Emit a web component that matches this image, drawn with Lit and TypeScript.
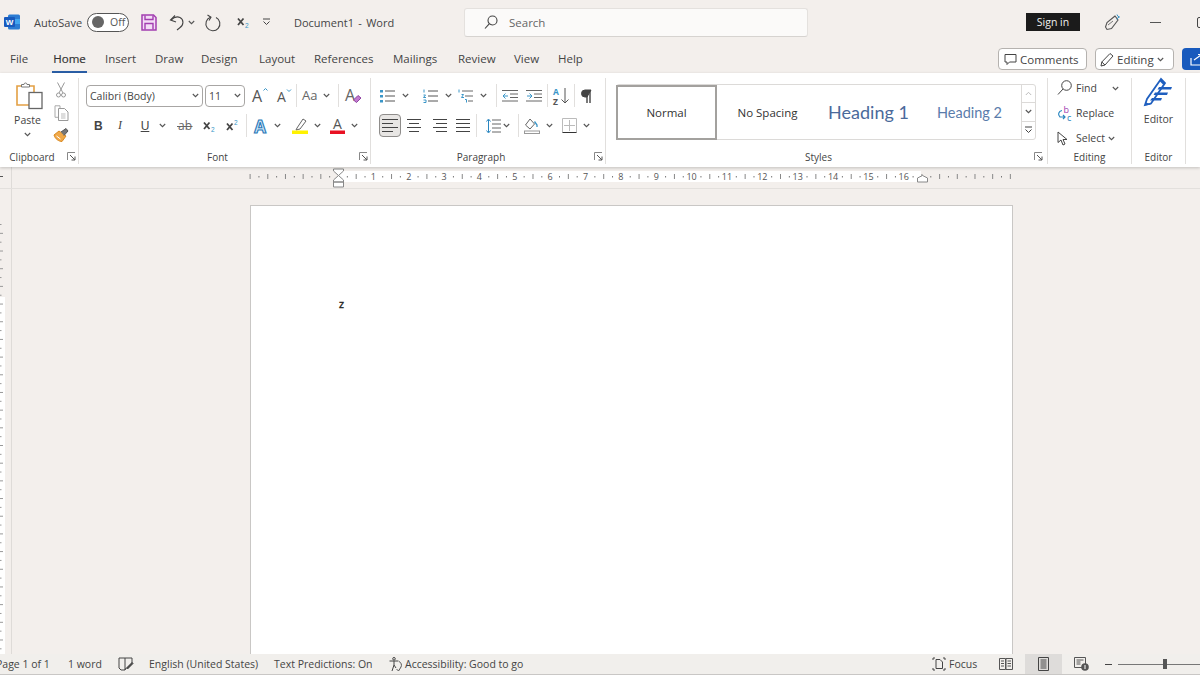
import { LitElement, html, css, svg } from 'lit';
import { customElement } from 'lit/decorators.js';

const ink = '#444';
const blue = '#3a96c8';

const chev = () => html`<svg class="chev" width="7" height="5" viewBox="0 0 7 5"><path d="M.8 1 3.5 3.7 6.2 1" fill="none" stroke="#555" stroke-width="1.1"/></svg>`;
const icon = (w: number, h: number, body: unknown) =>
  html`<svg width=${w} height=${h} viewBox="0 0 ${w} ${h}" fill="none" stroke="${ink}">${body}</svg>`;
const split = (body: unknown, tight = false) => html`<span class="split ${tight ? 'tight' : ''}">${body}${chev()}</span>`;
const launcher = () => icon(9, 9, svg`<path d="M.5 8V.5H8" stroke="#888"/><path d="M3 3l5 5M8 4.5V8H4.5" stroke="#555"/>`);
const lines = (xs: number[][]) => xs.map(([a, b, y]) => svg`<path d="M${a} ${y}H${b}"/>`);

const Icons = {
  word: icon(16, 16, svg`<rect x="4" y="0.5" width="12" height="15" rx="1.5" fill="#2b7cd3" stroke="none"/><rect x="10" y="5" width="6" height="5" fill="#41a5ee" stroke="none"/><rect x="0" y="3" width="11" height="10" rx="1" fill="#185abd" stroke="none"/><text x="5.5" y="11" font-size="8" font-weight="700" text-anchor="middle" fill="#fff" stroke="none" font-family="Liberation Sans">W</text>`),
  save: icon(16, 17, svg`<path d="M1 1h11.5L15 3.5V16H1z" fill="#f3dcf6" stroke="#a23eb0" stroke-width="1.5"/><path d="M4 1.5v4h8v-4M4 15.500v-6h8v6" stroke="#a23eb0" stroke-width="1.4"/>`),
  undo: icon(17, 17, svg`<path d="M6 1.500 1.500 6 7 8" stroke-width="1.1"/><path d="M2 6c3-3 6-3.800 9-2.500 4 2 4 8-.5 10.500L8 16" stroke-width="1.1"/>`),
  redo: icon(16, 17, svg`<path d="M5.500 3.200a7 7 0 1 0 5.500.300" stroke-width="1.1"/><path d="M2.500 1 6 3.200 4 6.500" stroke-width="1.1"/>`),
  sub: icon(12, 14, svg`<path d="M1 3.500 6.500 10M6.500 3.500 1 10" stroke-width="1.800" stroke="#444"/><text x="8" y="13" font-size="6.500" fill="${blue}" stroke="none" font-family="Liberation Sans">2</text>`),
  sup: icon(12, 14, svg`<path d="M1 4.500 6.500 11M6.500 4.500 1 11" stroke-width="1.800" stroke="#444"/><text x="8" y="6" font-size="6.500" fill="${blue}" stroke="none" font-family="Liberation Sans">2</text>`),
  custom: icon(9, 8, svg`<path d="M1 1h7M1.500 3.500 4.500 6.500 7.500 3.500"/>`),
  search: icon(14, 15, svg`<circle cx="8.500" cy="5.500" r="4.500" stroke-width="1.100"/><path d="M5.200 8.800 1 13.500" stroke-width="1.100"/>`),
  feather: icon(17, 18, svg`<path d="M11 3 3 9.500 1.500 14l1.500 2.500 4.500-1L14 7z" stroke-width="1.100" stroke="#555"/><path d="M4 12l5-4" stroke="#777"/><path d="M13 1.500l.8 1.700 1.700.8-1.700.8-.8 1.700" stroke="${blue}"/>`),
  comment: icon(13, 13, svg`<path d="M1 1.500h11v7.500H5.500L3 11.500V9H1z"/>`),
  pencil: icon(14, 15, svg`<path d="M10 1.500 13 4 5 13 1 14l.8-4z" stroke-width="1"/><path d="M1.800 10 5 13"/>`),
  share: icon(14, 13, svg`<path d="M1 5v7h11V7M4 7l7-5M8 1.500h3.500V5" stroke="#fff" stroke-width="1.200"/>`),
  paste: icon(27, 28, svg`<path d="M6 5H1v19h13" stroke="#e3a044" stroke-width="1.600"/><path d="M13 5h5v6" stroke="#e3a044" stroke-width="1.600"/><path d="M5.500 6V3.500H8a1.500 1.500 0 0 1 3 0h2.500V6z" fill="#fff" stroke="#777"/><rect x="13" y="11.500" width="13" height="16" fill="#fff" stroke="#666" stroke-width="1.300"/>`),
  cut: icon(10, 16, svg`<path d="M1.500 .5 7 11M8.500 .5 3 11" stroke="#999"/><circle cx="2.500" cy="13" r="2" stroke="#999"/><circle cx="7.500" cy="13" r="2" stroke="#999"/>`),
  copy: icon(15, 16, svg`<path d="M6 3V.8H1v11.500h3" stroke="#aaa"/><path d="M4.500 3.500h6l3.500 3.500v8.500H4.500z" fill="#fff" stroke="#999"/><path d="M7 9h4.500M7 11h4.500M7 13h4.500" stroke="#bbb"/>`),
  painter: icon(16, 15, svg`<path d="M1 7 6 3l7 5-4 5.500C6 13.500 2 11 1 7z" fill="#f0a848" stroke="#d98a22"/><path d="M8 4l5-3.500 2 2.500-4 4.500" fill="#777" stroke="#555"/><path d="M3.500 8l4 3" stroke="#fff"/>`),
  growA: icon(16, 17, svg`<text x="0" y="15" font-size="16" fill="#555" stroke="none" font-family="Open Sans">A</text><path d="M11.500 3.500 13.500 1.500 15.500 3.500" stroke="${blue}"/>`),
  shrinkA: icon(15, 15, svg`<text x="0" y="14" font-size="14" fill="#555" stroke="none" font-family="Open Sans">A</text><path d="M10 1.500 12 3.500 14 1.500" stroke="${blue}"/>`),
  clearFmt: icon(17, 17, svg`<text x="0" y="14" font-size="16" fill="#666" stroke="none" font-family="Open Sans">A</text><path d="M8.500 13 13 8.500l3 2.500-4.500 4.500z" fill="#c27ad0" stroke="#8e44a0"/>`),
  strike: icon(16, 14, svg`<text x="1" y="11" font-size="12" fill="#666" stroke="none" font-family="Open Sans">ab</text><path d="M0 7.500h15.500" stroke="#666"/>`),
  textFx: icon(16, 16, svg`<text x="8" y="14.500" text-anchor="middle" font-size="17" font-weight="700" fill="#cfe6f7" stroke="#2878b8" stroke-width="1.100" font-family="Open Sans">A</text>`),
  hilite: icon(16, 17, svg`<path d="M5 11 11 2l3 2-6 8-4 1z" fill="#fff" stroke="#666"/><rect x="0" y="13.500" width="16" height="3.500" fill="#fff200" stroke="none"/>`),
  fontCol: icon(15, 17, svg`<text x="7.500" y="12" text-anchor="middle" font-size="14" fill="#555" stroke="none" font-family="Open Sans">A</text><rect x="0" y="13.500" width="15" height="3.500" fill="#e81123" stroke="none"/>`),
  bullets: icon(16, 14, svg`<path d="M5 2h10M5 7h10M5 12h10" stroke="#555"/><rect x="0" y="1" width="3" height="2.500" fill="${blue}" stroke="none"/><rect x="0" y="6" width="3" height="2.500" fill="${blue}" stroke="none"/><rect x="0" y="11" width="3" height="2.500" fill="${blue}" stroke="none"/>`),
  numbers: icon(16, 14, svg`<path d="M5 2h10M5 7h10M5 12h10" stroke="#555"/><path d="M1 .5v3M.5 6h2L.5 8.500h2.500M.5 11h2.500v2.500H.5" stroke="${blue}"/>`),
  multi: icon(16, 14, svg`<path d="M4 2h11M7 7h8M10 12h5" stroke="#666"/><path d="M1 .5v3M3.500 5.500h2L3.500 8.500H6M7 10.500h1.500v3" stroke="${blue}"/>`),
  outdent: icon(16, 12, svg`<path d="M0 .5h16M8 4h8M8 7.500h8M0 11h16" stroke="#666"/><path d="M1 6h5M3.500 3.500 1 6l2.500 2.500" stroke="${blue}"/>`),
  indent: icon(16, 12, svg`<path d="M0 .5h16M8 4h8M8 7.500h8M0 11h16" stroke="#666"/><path d="M1 6h5M3.500 3.500 6 6 3.500 8.500" stroke="${blue}"/>`),
  sort: icon(16, 18, svg`<text x="0" y="8" font-size="8.500" font-weight="700" fill="${blue}" stroke="none" font-family="Open Sans">A</text><text x="0" y="17.500" font-size="8.500" font-weight="700" fill="#555" stroke="none" font-family="Open Sans">Z</text><path d="M12 1v15M8.500 12.500 12 16l3.500-3.500" stroke="#555"/>`),
  pilcrow: icon(12, 14, svg`<path d="M7 1v13M10 1v13" stroke="#444" stroke-width="1.400"/><path d="M11 1H5a3.500 3.500 0 0 0 0 7h2z" fill="#444" stroke="#444"/>`),
  alignL: icon(16, 13, lines([[0, 16, .5], [0, 11, 4.5], [0, 16, 8.5], [0, 11, 12.5]])),
  alignC: icon(16, 13, lines([[1, 15, .5], [3, 13, 4.5], [1, 15, 8.5], [3, 13, 12.5]])),
  alignR: icon(16, 13, lines([[2, 16, .5], [5, 16, 4.5], [2, 16, 8.5], [5, 16, 12.5]])),
  justify: icon(16, 13, lines([[1, 15, .5], [1, 15, 4.5], [1, 15, 8.5], [1, 15, 12.5]])),
  spacing: icon(15, 16, svg`<path d="M6 2h9M6 6h9M6 10h9M6 14h9" stroke="#666"/><path d="M2.500 2v12M.5 3.500 2.500 1l2 2.500M.5 12.500 2.500 15l2-2.500" stroke="#2a86c0"/>`),
  shading: icon(16, 16, svg`<path d="M6 1 1.500 7 6 11l4.500-5z" fill="#fff" stroke="#666"/><path d="M10.500 3.500l2.500 3.500v2" stroke="${blue}" stroke-width="1.300"/><rect x=".5" y="13" width="15" height="2.500" stroke="#999"/>`),
  borders: icon(15, 15, svg`<path d="M.5.5h14M.5.5v14M14.500.5v14M7.500 2v11M2 7.500h11" stroke="#bbb"/><path d="M.5 14.500h14" stroke="#333"/>`),
  find: icon(15, 16, svg`<circle cx="9.500" cy="5.500" r="4.800"/><path d="M6 9 1 14.500"/>`),
  replace: html`<svg width="16" height="15" viewBox="0 0 16 15" fill="none"><text x="6.500" y="7" font-size="9" fill="#a040b0" font-family="Open Sans">b</text><text x="10" y="14.500" font-size="9" fill="#2a86c0" font-family="Open Sans">c</text><path d="M5 4.500C1.500 5 .5 9 3 11h5M6 9l2 2-2 2" stroke="#2a86c0" stroke-width="1.200"/></svg>`,
  select: icon(13, 15, svg`<path d="M1 1v10.500l3-2.500 2 5 2-1-2-4.500h4z" fill="#fff" stroke="#444"/>`),
  editor: html`<svg width="29" height="29" viewBox="0 0 29 29" fill="none"><path d="M17 1 3 21l-2 6 6-1.500L21 5z" fill="#fff" stroke="#1f5fbf" stroke-width="1.800"/><path d="M15 9h13l-1 2.500H13.500zM11 14.500h13l-1 2.500H9.500zM8 20h10l-1 2.500H6z M1 24l6 2.500-6 1z" fill="#1f5fbf"/><path d="M17 1l4 4-1.500 2-4-4z" fill="#1f5fbf"/></svg>`,
  proof: icon(15, 14, svg`<path d="M1 1h6v12H3L1 11z M7 1h7v5M7 13l1-2" stroke="#444"/><path d="M8.500 11 14 5.500l1 1L9.500 12z" fill="#444"/>`),
  access: icon(14, 15, svg`<circle cx="5" cy="1.800" r="1.300"/><path d="M.5 4h9M5 4v4M5 8l-2 6M5 8l2 3"/><path d="M10 4.500a4 4 0 0 1 2 5.500L9.500 14l-2-2" stroke="#555"/>`),
  focus: icon(14, 14, svg`<path d="M1 3V1h2M11 1h2v2M13 11v2h-2M3 13H1v-2" stroke="#444"/><path d="M4 2.500h4l2.500 2.500v6.500H4z" stroke="#444"/>`),
  read: icon(14, 12, svg`<path d="M.5.5h6v11h-6zM7 .5h6.500v11H7z" stroke="#555"/><path d="M2 3h3M2 5.500h3M2 8h3M8.500 3h3.500M8.500 5.500h3.500M8.500 8h3.500" stroke="#555"/>`),
  print: icon(11, 14, svg`<path d="M.5.5h10v13H.5z" stroke="#444"/><path d="M2.500 3h6M2.500 5h6M2.500 7h6M2.500 9h6M2.500 11h6" stroke="#444"/>`),
  web: html`<svg width="15" height="14" viewBox="0 0 15 14" fill="none"><path d="M.5.5h11v10H.5zM2.500 3h7M2.500 5h4M2.500 7h4" stroke="#555"/><circle cx="11" cy="10" r="3.800" fill="#555"/><path d="M11 8v4" stroke="#fff"/></svg>`,
};

const PAGE_LEFT = 338;
const Q = 8.84;

@customElement('app-root')
export class AppRoot extends LitElement {
  static styles = css`
    :host {
      display: flex;
      flex-direction: column;
      width: 1200px;
      height: 675px;
      overflow: hidden;
      background: #f3efec;
      font-family: 'Open Sans', 'Noto Sans', sans-serif;
      font-size: 11px;
      color: #444;
    }
    svg { display: block; flex: none; overflow: visible; }
    .split { display: flex; align-items: center; gap: 6px; }
    .split.tight { gap: 2px; }

    .title {
      flex: none;
      height: 44px;
      box-sizing: border-box;
      padding-left: 4px;
      display: grid;
      grid-template-columns: 30px 53px 54px 28px 36px 32px 25px 32px 170px 344px 218px 78px 46px 47px auto;
      align-items: center;
    }
    .doc { word-spacing: 1.500px; }
    .toggle {
      width: 42px;
      height: 19px;
      box-sizing: border-box;
      border: 1px solid #555;
      border-radius: 10px;
      background: #fff;
      display: flex;
      align-items: center;
      gap: 6px;
      padding-left: 4px;
      font-size: 10.500px;
      color: #555;
    }
    .knob { width: 12px; height: 12px; border-radius: 50%; background: #666; flex: none; }
    .search {
      height: 29px;
      box-sizing: border-box;
      background: #fbfaf9;
      border: 1px solid #e4e1de;
      border-bottom-color: #d6d3d0;
      border-radius: 3px;
      display: flex;
      align-items: center;
      gap: 11px;
      padding-left: 19px;
      color: #666;
      font-size: 11.500px;
    }
    .signin {
      width: 54px;
      height: 18px;
      background: #1b1b1b;
      color: #eee;
      display: flex;
      align-items: center;
      justify-content: center;
      font-size: 10.500px;
    }
    .min { width: 11px; height: 1px; background: #555; }
    .restore { width: 8px; height: 9px; border: 1px solid #444; border-radius: 2px; }

    .tabs {
      flex: none;
      height: 29px;
      display: flex;
      justify-content: space-between;
      align-items: flex-start;
      padding-left: 10px;
      box-sizing: border-box;
    }
    .tablist {
      display: grid;
      grid-template-columns: 42px 53px 50px 46px 58px 55px 79px 65px 56px 44px auto;
      justify-items: start;
    }
    .tab { font-size: 11.500px; line-height: 30px; height: 27px; white-space: nowrap; }
    .tab.on { color: #333; -webkit-text-stroke: .2px #333; border-bottom: 2px solid #2b5fa8; width: 35px; text-align: center; }
    .tabs .right { display: flex; gap: 8px; margin-top: 4px; }
    .pill {
      height: 22px;
      box-sizing: border-box;
      border: 1px solid #b5b2af;
      border-radius: 4px;
      background: #fff;
      display: flex;
      align-items: center;
      gap: 3px;
      padding-left: 5px;
      font-size: 11.500px;
    }
    .pill.comments { width: 89px; }
    .pill.editing { width: 79px; padding-left: 4px; }
    .share {
      width: 18px;
      height: 22px;
      box-sizing: border-box;
      background: #185abd;
      border-radius: 4px 0 0 4px;
      display: flex;
      align-items: center;
      padding-left: 8px;
    }

    .ribbon {
      flex: none;
      height: 94px;
      box-sizing: border-box;
      background: #fff;
      box-shadow: 0 1px 3px rgba(0, 0, 0, .2);
      display: flex;
      padding: 5px 0 3px;
      position: relative;
    }
    .group {
      box-sizing: border-box;
      border-right: 1px solid #e1dfdd;
      display: flex;
      flex-direction: column;
    }
    .body { flex: 1; padding-top: 6px; min-height: 0; }
    .foot {
      flex: none;
      height: 15px;
      display: grid;
      grid-template-columns: 1fr auto;
      align-items: center;
      font-size: 10px;
      padding-right: 2px;
      text-align: center;
    }
    .foot span { padding-right: 3px; }

    .clip { width: 79px; }
    .clip .body { display: grid; grid-template-columns: 54px 1fr; padding-top: 3px; }
    .paste { display: flex; flex-direction: column; align-items: center; padding-left: 1px; }
    .paste svg:first-child { margin-left: 4px; }
    .paste span { margin-top: 3px; line-height: 16px; font-size: 10.500px; }
    .paste .chev { margin-top: 4px; }
    .small { display: flex; flex-direction: column; align-items: center; width: 14px; gap: 7px; padding-top: 1px; }

    .font { width: 292px; padding-left: 7px; }
    .font .foot { margin-left: -7px; }
    .row { display: grid; align-items: center; height: 23px; justify-items: start; }
    .row + .row { margin-top: 7px; }
    .f1 { grid-template-columns: 119px 47px 25px 19px 6px 36px 7px auto; }
    .f2 { grid-template-columns: 24px 23px 40px 26px 23px 20px 6px 40px 38px auto; margin-left: 4px; }
    .select {
      height: 22px;
      box-sizing: border-box;
      border: 1px solid #a8a6a4;
      border-radius: 4px;
      display: flex;
      align-items: center;
      justify-content: space-between;
      padding: 0 3px;
      font-size: 10.500px;
      background: #fff;
    }
    .select.fam { width: 117px; }
    .select.size { width: 40px; }
    .vdiv { width: 1px; height: 23px; background: #e1dfdd; }
    .aa { font-size: 13px; color: #666; line-height: 1; }
    .b { font-weight: 700; font-size: 12px; font-family: 'Liberation Sans', sans-serif; margin-left: 4px; }
    .i { font-style: italic; font-size: 12px; font-family: 'Liberation Serif', serif; margin-left: 4px; }
    .u { display: block; width: 16px; text-align: center; text-decoration: underline; font-size: 12px; font-family: 'Liberation Sans', sans-serif; }

    .para { width: 235px; padding-left: 8px; }
    .para .foot { margin-left: -8px; }
    .p1 { grid-template-columns: 43px 35px 38px 6px 24px 21px 6px 21px 6px auto; margin-left: 1px; }
    .p2 { grid-template-columns: 27px 25px 24px 21px 10px 32px 6px 38px auto; }
    .active {
      width: 22px;
      height: 23px;
      box-sizing: border-box;
      border: 1px solid #8f8d8b;
      border-radius: 4px;
      background: #e8e6e4;
      display: flex;
      align-items: center;
      justify-content: center;
    }

    .styles { width: 442px; padding-left: 10px; }
    .gallery {
      width: 420px;
      height: 56px;
      box-sizing: border-box;
      border: 1px solid #dcdad8;
      border-radius: 3px;
      display: flex;
    }
    .style { width: 101px; display: flex; align-items: center; justify-content: center; font-size: 11.500px; color: #333; }
    .style.norm { border: 2px solid #a3a19e; box-sizing: border-box; margin: 0 0 -1px -1px; height: 55px; }
    .style.h1 { font-size: 18px; color: #4b6a9b; font-family: 'Lato', 'Open Sans', sans-serif; }
    .style.h2 { font-size: 14.500px; color: #5a7cab; font-family: 'Lato', 'Open Sans', sans-serif; }
    .scroll {
      margin-left: auto;
      width: 13px;
      border-left: 1px solid #dcdad8;
      display: flex;
      flex-direction: column;
    }
    .scroll span { flex: 1; display: flex; align-items: center; justify-content: center; }
    .scroll span + span { border-top: 1px solid #dcdad8; }
    .styles .foot { margin-left: -10px; padding-right: 4px; }

    .editing-g { width: 84px; padding-left: 9px; }
    .editing-g .body { padding-top: 0; display: flex; flex-direction: column; gap: 5px; }
    .editing-g .foot { margin-left: -9px; padding-right: 0; }
    .ed { display: flex; align-items: center; height: 20px; gap: 3px; font-size: 10.500px; }
    .ed .ic { width: 16px; display: flex; }
    .ed > .chev { margin-left: 12px; }

    .editor { width: 54px; }
    .editor .body { padding-top: 0; display: flex; flex-direction: column; align-items: center; gap: 5px; }
    .editor .body span { font-size: 10.500px; }
    .editor .foot { padding-right: 0; }
    .editor .foot span, .editing-g .foot span { padding-right: 0; }

    .ruler {
      flex: none;
      height: 21px;
      border-bottom: 1px solid #e3e0dd;
    }
    .work {
      flex: 1;
      min-height: 0;
      display: flex;
      overflow: hidden;
    }
    .vruler { flex: none; width: 12px; }
    .page {
      box-sizing: border-box;
      flex: none;
      width: 763px;
      margin: 16px 0 0 238px;
      background: #fff;
      border: 1px solid #c9c7c5;
      border-bottom: 0;
      padding: 91px 0 0 88px;
      font-family: 'Lato', sans-serif;
      font-size: 11px;
      color: #222;
      -webkit-text-stroke: .3px #222;
    }

    .status {
      flex: none;
      height: 21px;
      box-sizing: border-box;
      background: #f1efec;
      border-bottom: 1px solid #c9c7c5;
      display: flex;
      align-items: center;
      font-size: 10.500px;
      white-space: nowrap;
    }
    .sl {
      display: grid;
      grid-template-columns: 72px 50px 31px 125px 115px 16px auto;
      align-items: center;
      margin-left: -4px;
    }
    .sr {
      margin-left: auto;
      width: 268px;
      height: 20px;
      display: grid;
      grid-template-columns: 67px 26px 37px 43px 13px 82px;
      align-items: center;
    }
    .focus { display: flex; gap: 3px; align-items: center; }
    .view-on { height: 20px; background: #dedcda; display: flex; align-items: center; justify-content: center; }
    .web { margin-left: 12px; }
    .minus { width: 7px; height: 1px; background: #444; }
    .slider { height: 1px; background: #777; display: flex; justify-content: flex-start; align-items: center; padding-left: 45px; }
    .thumb { width: 4px; height: 10px; background: #555; flex: none; }
  `;

  private renderRuler() {
    const marks: unknown[] = [];
    for (let q = -10; q <= 76; q++) {
      const x = PAGE_LEFT + q * Q;
      if (q === 0) continue;
      if (q % 2 !== 0) {
        marks.push(svg`<rect x=${x} y="9" width="1" height="1.500" fill="#777"/>`);
      } else if (q % 4 === 0 && q > 0 && q <= 64) {
        marks.push(svg`<text x=${x} y="13" text-anchor="middle" font-size="9" fill="#555">${q / 4}</text>`);
      } else {
        marks.push(svg`<rect x=${x} y="7" width="1" height="5" fill="#888"/>`);
      }
    }
    return html`<svg class="ruler" width="1200" height="21" viewBox="0 0 1200 21">
      <rect x=${PAGE_LEFT} y="4" width="583" height="11" fill="#fff"/>
      <path d="M11.500 0v21" stroke="#dedbd8"/>
      <rect x="0" y="9" width="3" height="1" fill="#555"/>
      ${marks}
      <path d="M333.500 2h10v2l-5 4.500-5-4.500zM333.500 15h10v-2l-5-4.500-5 4.500zM333.500 15h10v5h-10z" fill="#fff" stroke="#888"/>
      <path d="M917.500 15v-4l5-2.500 5 2.500v4z" fill="#fff" stroke="#888"/>
    </svg>`;
  }

  private renderVRuler() {
    const marks: unknown[] = [];
    for (let i = 0; i < 50; i++) {
      const y = 35 + i * Q;
      marks.push(svg`<rect x="0" y=${y} width=${i % 2 ? 3 : 1.500} height="1" fill="#999"/>`);
    }
    return html`<svg class="vruler" width="12" height="466" viewBox="0 0 12 466">
      <rect x="0" y="108" width="5" height="358" fill="#fff"/>
      <path d="M11.500 0v466" stroke="#dedbd8"/>
      ${marks}
    </svg>`;
  }

  render() {
    const tabs = ['File', 'Home', 'Insert', 'Draw', 'Design', 'Layout', 'References', 'Mailings', 'Review', 'View', 'Help'];
    return html`
      <div class="title">
        ${Icons.word}
        <span>AutoSave</span>
        <div class="toggle"><i class="knob"></i>Off</div>
        ${Icons.save}
        ${split(Icons.undo, true)}
        ${Icons.redo}
        ${Icons.sub}
        ${Icons.custom}
        <span class="doc">Document1 - Word</span>
        <div class="search">${Icons.search}<span>Search</span></div>
        <span></span>
        <div class="signin">Sign in</div>
        ${Icons.feather}
        <div class="min"></div>
        <div class="restore"></div>
      </div>

      <div class="tabs">
        <div class="tablist">
          ${tabs.map((t) => html`<div class="tab ${t === 'Home' ? 'on' : ''}">${t}</div>`)}
        </div>
        <div class="right">
          <div class="pill comments">${Icons.comment}Comments</div>
          <div class="pill editing">${Icons.pencil}Editing${chev()}</div>
          <div class="share">${Icons.share}</div>
        </div>
      </div>

      <div class="ribbon">
        <section class="group clip">
          <div class="body">
            <div class="paste">${Icons.paste}<span>Paste</span>${chev()}</div>
            <div class="small">${Icons.cut}${Icons.copy}${Icons.painter}</div>
          </div>
          <div class="foot"><span>Clipboard</span>${launcher()}</div>
        </section>

        <section class="group font">
          <div class="body">
            <div class="row f1">
              <div class="select fam">Calibri (Body)${chev()}</div>
              <div class="select size">11${chev()}</div>
              ${Icons.growA}
              ${Icons.shrinkA}
              <i class="vdiv"></i>
              ${split(html`<span class="aa">Aa</span>`)}
              <i class="vdiv"></i>
              ${Icons.clearFmt}
            </div>
            <div class="row f2">
              <span class="b">B</span>
              <span class="i">I</span>
              ${split(html`<span class="u">U</span>`)}
              ${Icons.strike}
              ${Icons.sub}
              ${Icons.sup}
              <i class="vdiv"></i>
              ${split(Icons.textFx)}
              ${split(Icons.hilite)}
              ${split(Icons.fontCol)}
            </div>
          </div>
          <div class="foot"><span>Font</span>${launcher()}</div>
        </section>

        <section class="group para">
          <div class="body">
            <div class="row p1">
              ${split(Icons.bullets)}
              ${split(Icons.numbers)}
              ${split(Icons.multi)}
              <i class="vdiv"></i>
              ${Icons.outdent}
              ${Icons.indent}
              <i class="vdiv"></i>
              ${Icons.sort}
              <i class="vdiv"></i>
              ${Icons.pilcrow}
            </div>
            <div class="row p2">
              <div class="active">${Icons.alignL}</div>
              ${Icons.alignC}
              ${Icons.alignR}
              ${Icons.justify}
              <i class="vdiv"></i>
              ${split(Icons.spacing, true)}
              <i class="vdiv"></i>
              ${split(Icons.shading)}
              ${split(Icons.borders)}
            </div>
          </div>
          <div class="foot"><span>Paragraph</span>${launcher()}</div>
        </section>

        <section class="group styles">
          <div class="body">
            <div class="gallery">
              <div class="style norm">Normal</div>
              <div class="style">No Spacing</div>
              <div class="style h1">Heading 1</div>
              <div class="style h2">Heading 2</div>
              <div class="scroll">
                <span><svg width="7" height="5" viewBox="0 0 7 5"><path d="M.8 4 3.5 1.300 6.200 4" fill="none" stroke="#bbb"/></svg></span>
                <span>${chev()}</span>
                <span>${Icons.custom}</span>
              </div>
            </div>
          </div>
          <div class="foot"><span>Styles</span>${launcher()}</div>
        </section>

        <section class="group editing-g">
          <div class="body">
            <div class="ed"><span class="ic">${Icons.find}</span>Find${chev()}</div>
            <div class="ed"><span class="ic">${Icons.replace}</span>Replace</div>
            <div class="ed"><span class="ic">${Icons.select}</span>Select<span>${chev()}</span></div>
          </div>
          <div class="foot"><span>Editing</span></div>
        </section>

        <section class="group editor">
          <div class="body">${Icons.editor}<span>Editor</span></div>
          <div class="foot"><span>Editor</span></div>
        </section>
      </div>

      ${this.renderRuler()}

      <div class="work">
        ${this.renderVRuler()}
        <div class="page">z</div>
      </div>

      <div class="status">
        <div class="sl">
          <span>Page 1 of 1</span>
          <span>1 word</span>
          ${Icons.proof}
          <span>English (United States)</span>
          <span>Text Predictions: On</span>
          ${Icons.access}
          <span>Accessibility: Good to go</span>
        </div>
        <div class="sr">
          <div class="focus">${Icons.focus}Focus</div>
          ${Icons.read}
          <div class="view-on">${Icons.print}</div>
          <div class="web">${Icons.web}</div>
          <div class="minus"></div>
          <div class="slider"><i class="thumb"></i></div>
        </div>
      </div>
    `;
  }
}
